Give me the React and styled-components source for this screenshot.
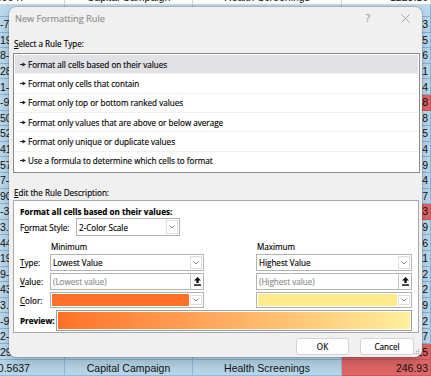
import React from 'react';
import styled, { createGlobalStyle } from 'styled-components';

const Global = createGlobalStyle`
  html, body { margin: 0; padding: 0; width: 431px; height: 376px; overflow: hidden; background: #fff; }
  #root { width: 431px; height: 376px; overflow: hidden; }
  * { box-sizing: border-box; }
`;

/* ---------- spreadsheet behind the dialog ---------- */
const Sheet = styled.div`
  position: relative;
  width: 431px;
  height: 376px;
  overflow: hidden;
  display: flex;
  flex-direction: column;
  font-family: "Liberation Sans", Arial, sans-serif;
  font-size: 10.5px;
  color: #111;
`;

const SheetRow = styled.div`
  flex: 0 0 auto;
  height: ${p => p.$h}px;
  margin-top: ${p => p.$offset || 0}px;
  display: grid;
  grid-template-columns: 65px 128px 149px 89px;
`;

const toneBg = { white: '#ffffff', blue: '#bddbef', band: '#b8d7ea', red: '#e26767' };
const toneLine = { white: '#d6d6d6', blue: '#86b7dc', band: '#8fbcdc', red: '#c95a5a' };

const Cell = styled.div`
  background: ${p => toneBg[p.$tone]};
  border-right: 1px solid ${p => toneLine[p.$tone]};
  border-bottom: 1px solid ${p => toneLine[p.$tone]};
  display: flex;
  align-items: center;
  justify-content: ${p => (p.$align === 'right' ? 'flex-end' : p.$align === 'center' ? 'center' : 'flex-start')};
  padding: ${p => (p.$align === 'right' ? '0 2px 0 0' : '0')};
  overflow: hidden;
  white-space: nowrap;
`;

const CellText = styled.span`
  margin-left: ${p => p.$shift || 0}px;
`;

const leftFrag = ['-7', '19', '8-', '28', '1-', '-9', '50', '52', '41', '57', '7-', '90', '-3', '3.', '44', '19', '9-', '43', '3.', '-9', '2-', '29'];
const rightDigit = ['3', '5', '6', '1', '4', '8', '8', '5', '4', '9', '4', '7', '3', '9', '6', '1', '2', '2', '9', '2', '7', '5'];
const redRows = [6, 13, 22];

/* ---------- dialog ---------- */
const Dialog = styled.div`
  position: absolute;
  left: 9px;
  top: 7px;
  width: 413px;
  height: 350px;
  background: #f0f0f0;
  border-radius: 7px;
  box-shadow: 0 0 0 1px rgba(0, 0, 0, 0.13), 0 5px 14px rgba(0, 0, 0, 0.22);
  font-family: "Open Sans", "Noto Sans", sans-serif;
  font-size: 8.1px;
  color: #000;
  -webkit-text-stroke: 0.15px currentColor;
  display: flex;
  flex-direction: column;
  overflow: hidden;
`;

const TitleBar = styled.div`
  height: 22px;
  display: flex;
  align-items: center;
  padding-left: 6px;
  font-size: 9.2px;
  color: #8e8e8e;
`;

const TitleText = styled.div`
  flex: 1;
`;

const TitleButton = styled.div`
  width: ${p => p.$w}px;
  height: 22px;
  display: flex;
  align-items: center;
  justify-content: center;
  color: #9a9a9a;
  font-size: 10px;
`;

const SectionLabel = styled.div`
  margin-top: ${p => p.$mt}px;
  padding-left: 5px;
  height: 12px;
  line-height: 12px;
  white-space: nowrap;
`;

const Key = styled.span`
  text-decoration: underline;
  text-underline-offset: 1px;
`;

const RuleList = styled.div`
  margin: 3px 2px 0 4px;
  height: 120px;
  border: 1px solid #8a8a8a;
  background: #fff;
  padding: 1px;
  display: flex;
  flex-direction: column;
`;

const RuleItem = styled.div`
  height: 19.35px;
  flex: 0 0 auto;
  display: flex;
  align-items: center;
  padding-left: 5px;
  gap: 2px;
  background: ${p => (p.$selected ? '#e0e0e5' : '#fff')};
  border-bottom: 1px solid ${p => (p.$last ? 'transparent' : '#f1f1f1')};
`;

const DescBox = styled.div`
  margin: 1px 3px 0 4px;
  height: 133px;
  border: 1px solid #a8a8a8;
  background: #fff;
  padding: 5px 0 0 6px;
  display: flex;
  flex-direction: column;
`;

const Heading = styled.div`
  height: 12px;
  line-height: 12px;
  font-weight: 700;
`;

const StyleRow = styled.div`
  height: 18px;
  display: flex;
  align-items: center;
`;

const FieldLabel = styled.div`
  width: ${p => p.$w || 30}px;
  font-weight: ${p => (p.$bold ? 700 : 400)};
  flex: 0 0 auto;
  white-space: nowrap;
`;

const ScaleGrid = styled.div`
  margin-top: 4px;
  display: grid;
  grid-template-columns: 30px 154px 52px 156px;
  grid-template-rows: 12px 17px 17px 16px;
  row-gap: 2px;
  align-items: center;
`;

const ColHead = styled.div`
  padding-left: 1px;
`;

const Field = styled.div`
  width: ${p => (p.$w ? `${p.$w}px` : '100%')};
  height: ${p => p.$h || 17}px;
  border: 1px solid #b3b3b3;
  background: #fff;
  display: flex;
  align-items: center;
  padding: ${p => (p.$swatch ? '1px' : '0 0 0 2px')};
  color: ${p => (p.$muted ? '#8c8c8c' : '#000')};
`;

const FieldText = styled.span`
  flex: 1;
  white-space: nowrap;
`;

const ChevronBox = styled.div`
  width: 12px;
  height: calc(100% - 2px);
  margin: 0 ${p => p.$mr ?? 1}px 0 1px;
  border: 1px solid #dedede;
  display: flex;
  align-items: center;
  justify-content: center;
  flex: 0 0 auto;
`;

const PickButton = styled.div`
  width: 13px;
  height: 100%;
  border-left: 1px solid #c4c4c4;
  display: flex;
  align-items: center;
  justify-content: center;
  flex: 0 0 auto;
`;

const Swatch = styled.div`
  flex: 1;
  height: 100%;
  background: ${p => p.$color};
`;

const PreviewRow = styled.div`
  margin-top: 2px;
  height: 21px;
  display: flex;
  align-items: center;
`;

const PreviewBar = styled.div`
  width: 356px;
  height: 21px;
  border: 1px solid #9e9e9e;
  padding: 1px;
  background: #fff;
`;

const Gradient = styled.div`
  width: 100%;
  height: 100%;
  background: linear-gradient(to right, #ff7128, #ffef9c);
`;

const Footer = styled.div`
  margin-top: 5px;
  display: flex;
  justify-content: flex-end;
  gap: 11px;
  padding-right: 8px;
`;

const Button = styled.div`
  width: ${p => p.$w}px;
  height: 17px;
  border: 1px solid #d3d3d3;
  border-radius: 3px;
  background: #fdfdfd;
  display: flex;
  align-items: center;
  justify-content: center;
`;

const Grip = styled.svg`
  position: absolute;
  right: 2px;
  bottom: 2px;
`;

const Chevron = () => (
  <svg width="6" height="4" viewBox="0 0 6 4">
    <polyline points="0.5,0.5 3,3 5.5,0.5" fill="none" stroke="#7a7a7a" strokeWidth="0.9" />
  </svg>
);

const RuleArrow = () => (
  <svg width="6" height="5" viewBox="0 0 6 5">
    <rect x="0" y="2" width="3" height="1" fill="#222" />
    <path d="M2.5 0.4 L6 2.5 L2.5 4.6 Z" fill="#222" />
  </svg>
);

const UploadIcon = () => (
  <svg width="7" height="9" viewBox="0 0 7 9">
    <path d="M3.5 0 L7 3.6 H4.7 V6 H2.3 V3.6 H0 Z" fill="#111" />
    <rect x="0" y="7.3" width="7" height="1.5" fill="#111" />
  </svg>
);

const CloseIcon = () => (
  <svg width="9" height="9" viewBox="0 0 9 9">
    <path d="M0.5 0.5 L8.5 8.5 M8.5 0.5 L0.5 8.5" stroke="#9a9a9a" strokeWidth="0.9" />
  </svg>
);

const rules = [
  'Format all cells based on their values',
  'Format only cells that contain',
  'Format only top or bottom ranked values',
  'Format only values that are above or below average',
  'Format only unique or duplicate values',
  'Use a formula to determine which cells to format',
];

function Dropdown({ w, h, text, mr }) {
  return (
    <Field $w={w} $h={h}>
      <FieldText>{text}</FieldText>
      <ChevronBox $mr={mr}><Chevron /></ChevronBox>
    </Field>
  );
}

function ValueInput({ text }) {
  return (
    <Field $muted>
      <FieldText>{text}</FieldText>
      <PickButton><UploadIcon /></PickButton>
    </Field>
  );
}

function ColorPicker({ color }) {
  return (
    <Field $h={16} $swatch>
      <Swatch $color={color} />
      <ChevronBox $mr={0}><Chevron /></ChevronBox>
    </Field>
  );
}

export default function App() {
  return (
    <>
      <Global />
      <Sheet>
        <SheetRow $h={16} $offset={-11}>
          <Cell $tone="white"><CellText $shift={-4}>69047</CellText></Cell>
          <Cell $tone="white" $align="center">Capital Campaign</Cell>
          <Cell $tone="white" $align="center">Health Screenings</Cell>
          <Cell $tone="white" $align="right">1228.16</Cell>
        </SheetRow>
        <SheetRow $h={12}>
          <Cell $tone="blue" />
          <Cell $tone="blue" />
          <Cell $tone="blue" />
          <Cell $tone="blue" />
        </SheetRow>
        {leftFrag.map((frag, i) => {
          const red = redRows.includes(i + 1);
          return (
            <SheetRow key={i} $h={15.6}>
              <Cell $tone="blue"><CellText>{frag}0.25</CellText></Cell>
              <Cell $tone="blue" />
              <Cell $tone="blue" />
              <Cell $tone={red ? 'red' : 'blue'} $align="right">{`41${rightDigit[i]}`}</Cell>
            </SheetRow>
          );
        })}
        <SheetRow $h={16}>
          <Cell $tone="band"><CellText $shift={-8}>90.5637</CellText></Cell>
          <Cell $tone="band" $align="center">Capital Campaign</Cell>
          <Cell $tone="band" $align="center">Health Screenings</Cell>
          <Cell $tone="red" $align="right">246.93</Cell>
        </SheetRow>
        <SheetRow $h={12}>
          <Cell $tone="blue" />
          <Cell $tone="blue" />
          <Cell $tone="blue" />
          <Cell $tone="blue" />
        </SheetRow>

        <Dialog>
          <TitleBar>
            <TitleText>New Formatting Rule</TitleText>
            <TitleButton $w={40}>?</TitleButton>
            <TitleButton $w={34}><CloseIcon /></TitleButton>
          </TitleBar>

          <SectionLabel $mt={9}><Key>S</Key>elect a Rule Type:</SectionLabel>
          <RuleList>
            {rules.map((r, i) => (
              <RuleItem key={r} $selected={i === 0} $last={i === rules.length - 1}>
                <RuleArrow />
                <span>{r}</span>
              </RuleItem>
            ))}
          </RuleList>

          <SectionLabel $mt={14}><Key>E</Key>dit the Rule Description:</SectionLabel>
          <DescBox>
            <Heading>Format all cells based on their values:</Heading>
            <StyleRow>
              <FieldLabel $w={56}>F<Key>o</Key>rmat Style:</FieldLabel>
              <Dropdown w={104} h={18} text="2-Color Scale" mr={1} />
            </StyleRow>
            <ScaleGrid>
              <span />
              <ColHead>Minimum</ColHead>
              <span />
              <ColHead>Maximum</ColHead>

              <FieldLabel><Key>T</Key>ype:</FieldLabel>
              <Dropdown text="Lowest Value" />
              <span />
              <Dropdown text="Highest Value" />

              <FieldLabel><Key>V</Key>alue:</FieldLabel>
              <ValueInput text="(Lowest value)" />
              <span />
              <ValueInput text="(Highest value)" />

              <FieldLabel><Key>C</Key>olor:</FieldLabel>
              <ColorPicker color="#ff7128" />
              <span />
              <ColorPicker color="#ffeb8c" />
            </ScaleGrid>
            <PreviewRow>
              <FieldLabel $w={36} $bold>Preview:</FieldLabel>
              <PreviewBar><Gradient /></PreviewBar>
            </PreviewRow>
          </DescBox>

          <Footer>
            <Button $w={53}>OK</Button>
            <Button $w={54}>Cancel</Button>
          </Footer>

          <Grip width="7" height="7" viewBox="0 0 7 7">
            <rect x="5" y="1" width="1.2" height="1.2" fill="#a8a8a8" />
            <rect x="3" y="3" width="1.2" height="1.2" fill="#a8a8a8" />
            <rect x="5" y="3" width="1.2" height="1.2" fill="#a8a8a8" />
            <rect x="1" y="5" width="1.2" height="1.2" fill="#a8a8a8" />
            <rect x="3" y="5" width="1.2" height="1.2" fill="#a8a8a8" />
            <rect x="5" y="5" width="1.2" height="1.2" fill="#a8a8a8" />
          </Grip>
        </Dialog>
      </Sheet>
    </>
  );
}
